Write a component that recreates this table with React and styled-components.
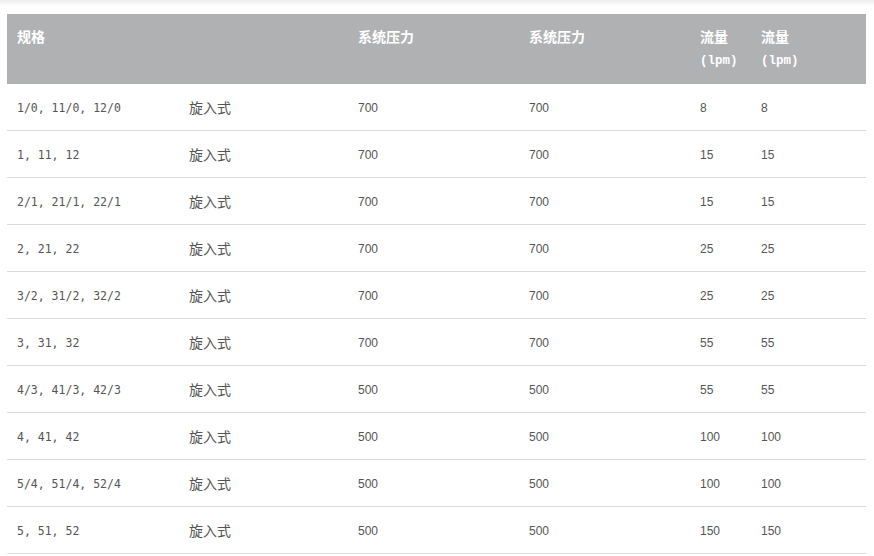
import styled, { createGlobalStyle } from 'styled-components';

const GlobalStyle = createGlobalStyle`
  html, body {
    margin: 0;
    padding: 0;
    background: #fff;
  }
`;

const COLORS = {
  headBg: '#b0b1b3',
  line: '#dcdcdc',
  text: '#555',
};

const rows = [
  ['1/0, 11/0, 12/0', '700', '700', '8', '8'],
  ['1, 11, 12', '700', '700', '15', '15'],
  ['2/1, 21/1, 22/1', '700', '700', '15', '15'],
  ['2, 21, 22', '700', '700', '25', '25'],
  ['3/2, 31/2, 32/2', '700', '700', '25', '25'],
  ['3, 31, 32', '700', '700', '55', '55'],
  ['4/3, 41/3, 42/3', '500', '500', '55', '55'],
  ['4, 41, 42', '500', '500', '100', '100'],
  ['5/4, 51/4, 52/4', '500', '500', '100', '100'],
  ['5, 51, 52', '500', '500', '150', '150'],
];

const widths = [172, 169, 171, 171, 61, 115];

export default function App() {
  return (
    <Page>
      <GlobalStyle />
      <TopShade />
      <Wrap>
        <Table>
          <colgroup>
            {widths.map((w, i) => (
              <col key={i} style={{ width: w }} />
            ))}
          </colgroup>
          <thead>
            <tr>
              <Th>规格</Th>
              <Th />
              <Th>系统压力</Th>
              <Th>系统压力</Th>
              <Th>
                流量
                <Unit>(lpm)</Unit>
              </Th>
              <Th>
                流量
                <Unit>(lpm)</Unit>
              </Th>
            </tr>
          </thead>
          <tbody>
            {rows.map((r, i) => (
              <tr key={i}>
                <Td $kind="spec">{r[0]}</Td>
                <Td $kind="cjk">旋入式</Td>
                <Td>{r[1]}</Td>
                <Td>{r[2]}</Td>
                <Td>{r[3]}</Td>
                <Td>{r[4]}</Td>
              </tr>
            ))}
          </tbody>
        </Table>
      </Wrap>
    </Page>
  );
}

const Page = styled.div`
  width: 874px;
  height: 556px;
  overflow: hidden;
  background: #fff;
`;

const TopShade = styled.div`
  height: 6px;
  background: linear-gradient(#ededed, #fff);
`;

const Wrap = styled.div`
  padding: 8px 8px 0 7px;
`;

const Table = styled.table`
  width: 859px;
  table-layout: fixed;
  border-collapse: separate;
  border-spacing: 0;
`;

const Th = styled.th`
  background: ${COLORS.headBg};
  color: #fff;
  text-align: left;
  vertical-align: top;
  padding: 10px 10px 10px;
  height: 50px;
  font-family: 'Noto Sans CJK SC', sans-serif;
  font-size: 14px;
  font-weight: 700;
  line-height: 24px;
`;

const Unit = styled.span`
  display: block;
  line-height: 26px;
  font-family: 'Liberation Mono', 'Noto Sans CJK SC', monospace;
  font-size: 12.5px;
  font-weight: 700;
`;

const Td = styled.td`
  padding: ${({ $kind }) => ($kind === 'cjk' ? '12px 10px 11px' : '13px 10px 10px')};
  line-height: 23px;
  border-bottom: 1px solid ${COLORS.line};
  color: ${COLORS.text};
  white-space: nowrap;
  font-family: ${({ $kind }) =>
    $kind === 'spec'
      ? "'DejaVu Sans Mono', monospace"
      : $kind === 'cjk'
      ? "'Noto Sans CJK SC', sans-serif"
      : "'Liberation Sans', sans-serif"};
  font-size: ${({ $kind }) =>
    $kind === 'spec' ? '11.5px' : $kind === 'cjk' ? '14px' : '12px'};
`;
